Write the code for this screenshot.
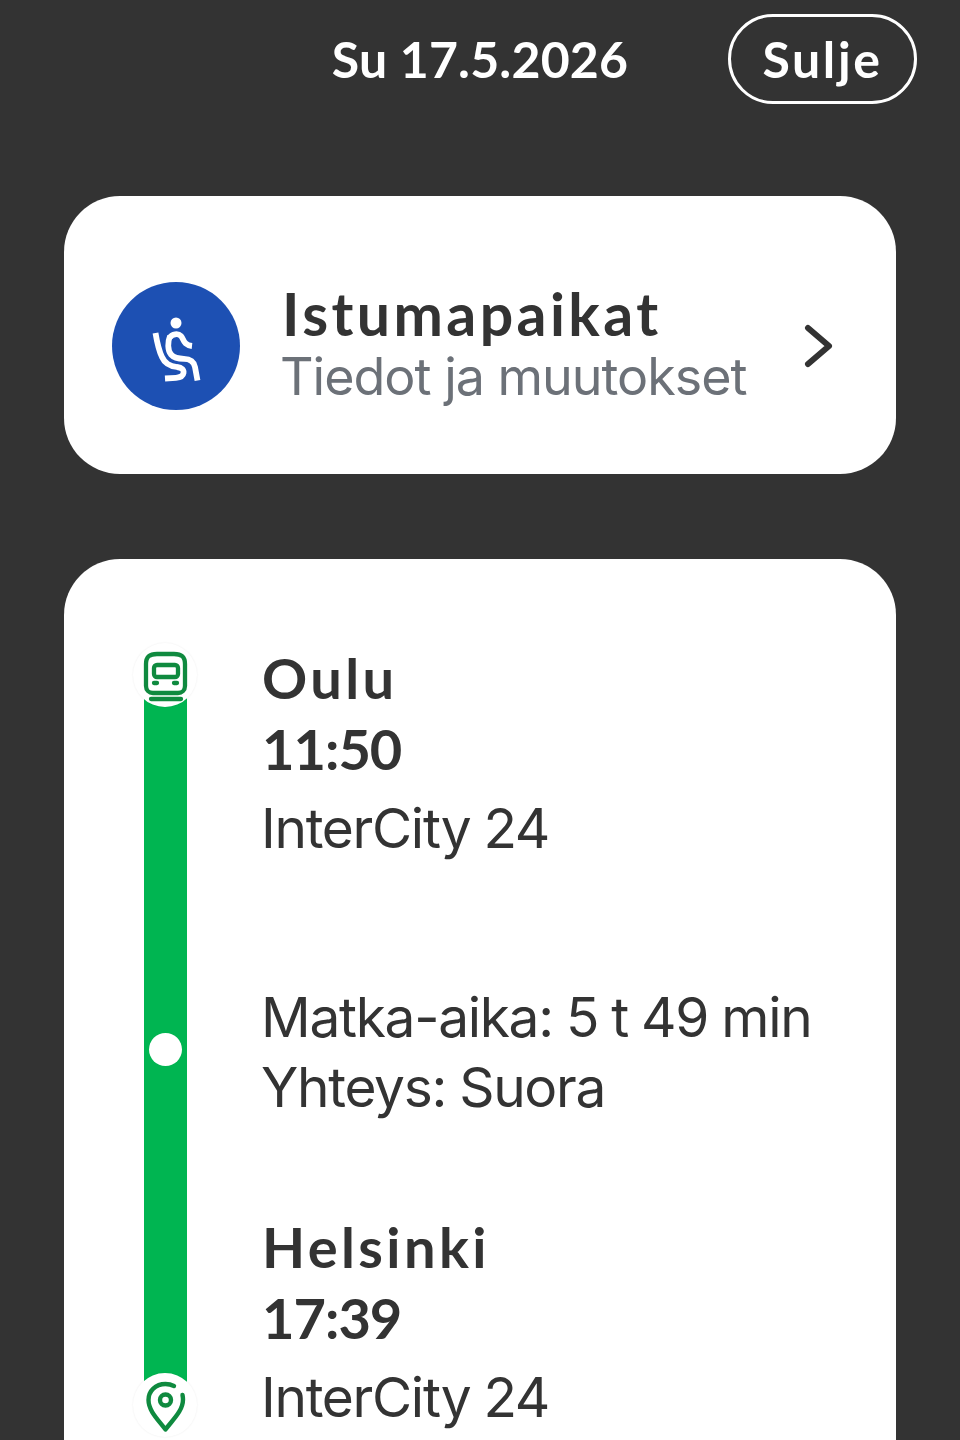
<script>
  const stops = [
    { city: 'Oulu', time: '11:50', train: 'InterCity 24' },
    { city: 'Helsinki', time: '17:39', train: 'InterCity 24' }
  ];
</script>

<div class="page">
  <header class="top">
    <div class="date">Su 17.5.2026</div>
    <button class="close">Sulje</button>
  </header>

  <section class="card seats">
    <div class="seat-icon">
      <svg viewBox="112 282 128 128" width="128" height="128" fill="none" stroke="#fff" stroke-width="5.800" stroke-linejoin="round">
        <circle cx="176" cy="323" r="5.500" fill="#fff" stroke="none" />
        <path d="M155.500 333 C157 342 159 351 162 357 C165 364 170 366 177 367 C182 367.500 184 370 183.500 373 C183 376 180 377.500 176 377.800 L165 378.500" />
        <path d="M170 336 C167.500 342 167.500 350 171 354.500 C174 358 178 358.800 184 358.800 C191 358.800 194 362 195 367 L197.500 380.500" />
        <path d="M170 337.500 C172 334 178 333 181 336 C184 339 183 345 192 346" />
      </svg>
    </div>
    <div class="seat-text">
      <div class="seat-title">Istumapaikat</div>
      <div class="seat-sub">Tiedot ja muutokset</div>
    </div>
    <svg class="chevron" viewBox="0 0 30 44" width="30" height="44" fill="none" stroke="#333" stroke-width="6" stroke-linecap="round" stroke-linejoin="round">
      <path d="M4 4 L25 22 L4 40" />
    </svg>
  </section>

  <section class="card journey">
    <div class="line">
      <div class="badge">
        <svg viewBox="133 643 64 64" width="64" height="64" fill="none" stroke="#0f8a3f" stroke-width="4.300" stroke-linejoin="round" stroke-linecap="round">
          <path d="M146 664 C146 656 150 654 157 654 H174 C181 654 185 656 185 664 V686 C185 690 182 693 178 693 H153 C149 693 146 690 146 686 Z" />
          <rect x="154" y="665" width="24" height="12" rx="3" />
          <path d="M154 683 H157 M174 683 H177 M151 699 H181" />
        </svg>
      </div>
      <div class="dot"></div>
      <div class="badge">
        <svg viewBox="133 1373 64 64" width="64" height="64" fill="none" stroke="#0f8a3f" stroke-width="4.400" stroke-linecap="round" stroke-linejoin="round">
          <path d="M174 1386 C171 1384.500 168.500 1384 165.500 1384 C155.500 1384 148.500 1391 148.500 1400 C148.500 1411 158.500 1420 165.500 1429.500 C172.500 1420 183 1411 183 1399.500 C183 1398 182.800 1396.500 182.500 1395" />
          <circle cx="165.500" cy="1400" r="5.500" />
        </svg>
      </div>
    </div>

    <div class="details">
      <div class="stop">
        <div class="city">{stops[0].city}</div>
        <div class="time">{stops[0].time}</div>
        <div class="train">{stops[0].train}</div>
      </div>
      <div class="info">
        <div>Matka-aika: 5 t 49 min</div>
        <div>Yhteys: Suora</div>
      </div>
      <div class="stop">
        <div class="city">{stops[1].city}</div>
        <div class="time">{stops[1].time}</div>
        <div class="train">{stops[1].train}</div>
      </div>
    </div>
  </section>
</div>

<style>
  :global(body) {
    margin: 0;
    background: #333333;
  }

  .page {
    height: 1440px;
    overflow: hidden;
    background: #333333;
    font-family: Lato, sans-serif;
    color: #333333;
    box-sizing: border-box;
    padding: 14px 64px 0;
  }

  .top {
    position: relative;
    height: 90px;
    display: flex;
    align-items: center;
    justify-content: center;
  }

  .date {
    color: #fff;
    font-size: 50px;
    font-weight: 700;
    letter-spacing: 0.2px;
  }

  .close {
    position: absolute;
    right: -21px;
    top: 0;
    width: 189px;
    height: 90px;
    border: 3px solid #fff;
    border-radius: 45px;
    background: transparent;
    color: #fff;
    font-family: inherit;
    font-size: 50px;
    font-weight: 700;
    letter-spacing: 2.600px;
    padding: 0;
  }

  .card {
    background: #fff;
    border-radius: 56px;
  }

  .seats {
    margin-top: 92px;
    height: 278px;
    display: flex;
    align-items: center;
    padding: 22px 62px 0 48px;
    box-sizing: border-box;
  }

  .seat-icon {
    width: 128px;
    height: 128px;
    border-radius: 50%;
    background: #1d50b3;
    display: flex;
    flex: none;
  }

  .seat-text {
    flex: 1;
    margin-left: 42px;
  }

  .seat-title {
    font-size: 59px;
    font-weight: 700;
    line-height: 60px;
    letter-spacing: 3.400px;
  }

  .seat-sub {
    font-family: Inter, sans-serif;
    font-size: 52px;
    line-height: 62px;
    color: #6c7178;
    letter-spacing: -1px;
    margin: 2px 0 0 -2px;
  }

  .journey {
    margin-top: 85px;
    height: 1000px;
    display: flex;
    padding: 84px 0 0 69px;
    box-sizing: border-box;
  }

  .line {
    position: relative;
    width: 64px;
    height: 794px;
    flex: none;
    display: flex;
    flex-direction: column;
    align-items: center;
    justify-content: space-between;
  }

  .line::before {
    content: '';
    position: absolute;
    left: 11px;
    top: 30px;
    bottom: 30px;
    width: 43px;
    background: #00b551;
  }

  .badge {
    position: relative;
    width: 64px;
    height: 64px;
    border-radius: 50%;
    background: #fff;
    box-shadow: 0 0 2px rgba(0, 0, 0, 0.08);
    display: flex;
  }

  .badge svg {
    display: block;
  }

  .dot {
    position: relative;
    width: 33px;
    height: 33px;
    border-radius: 50%;
    background: #fff;
    margin-top: 18px;
  }

  .details {
    margin-left: 65px;
    display: flex;
    flex-direction: column;
  }

  .city,
  .time {
    font-size: 56px;
    font-weight: 700;
    line-height: 70px;
  }

  .city {
    letter-spacing: 3.400px;
  }

  .time {
    margin-top: 1px;
    margin-bottom: -1px;
    letter-spacing: -1px;
  }

  .train,
  .info {
    font-family: Inter, sans-serif;
    font-size: 55px;
    line-height: 70px;
    letter-spacing: -1.300px;
    word-spacing: -1px;
    margin-left: -1px;
  }

  .train {
    margin-top: 10px;
  }

  .info {
    margin-top: 119px;
    margin-bottom: 90px;
  }
</style>
